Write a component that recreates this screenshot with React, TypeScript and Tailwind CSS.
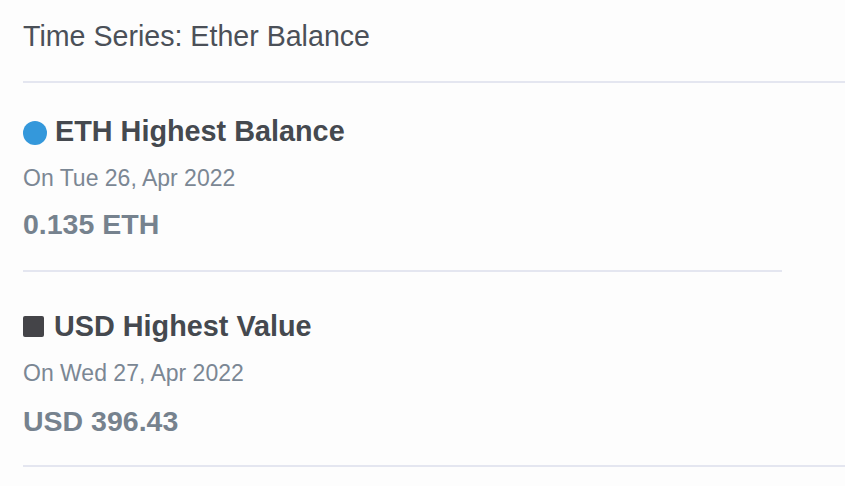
const stats = [
  {
    id: "eth",
    title: "ETH Highest Balance",
    date: "On Tue 26, Apr 2022",
    value: "0.135 ETH",
    marker: "circle",
  },
  {
    id: "usd",
    title: "USD Highest Value",
    date: "On Wed 27, Apr 2022",
    value: "USD 396.43",
    marker: "square",
  },
]

const App = () => {
  return (
    <div className="min-h-screen w-full bg-[#fdfdfd] pl-[23px] font-['Liberation_Sans',Arial,sans-serif]">
      <h2 className="pt-[22px] text-[28.6px] leading-[28px] text-[#4b5058]">
        Time Series: Ether Balance
      </h2>
      <div className="mt-[31px] h-[2px] bg-[#e4e6f0]" />

      {/* ETH */}
      <div className="mt-[34px] flex items-center gap-[8px]">
        <span className="mt-[3px] h-[24px] w-[24px] rounded-full bg-[#3498db]" />
        <h3 className="text-[28.8px] font-bold leading-[28px] text-[#45494f]">
          {stats[0].title}
        </h3>
      </div>
      <p className="mt-[22px] text-[23px] leading-[22px] text-[#7b8794]">
        {stats[0].date}
      </p>
      <p className="mt-[21px] text-[28.5px] font-bold leading-[28px] text-[#76828e]">
        {stats[0].value}
      </p>
      <div className="mt-[32px] mr-[63px] h-[2px] bg-[#e4e6f0]" />

      {/* USD */}
      <div className="mt-[40px] flex items-center gap-[10px]">
        <span className="h-[21px] w-[21px] rounded-[2px] bg-[#444448]" />
        <h3 className="text-[28.8px] font-bold leading-[28px] text-[#45494f]">
          {stats[1].title}
        </h3>
      </div>
      <p className="mt-[22px] text-[23px] leading-[22px] text-[#7b8794]">
        {stats[1].date}
      </p>
      <p className="mt-[23px] text-[28.5px] font-bold leading-[28px] text-[#76828e]">
        {stats[1].value}
      </p>
      <div className="mt-[30px] h-[2px] bg-[#e4e6f0]" />
    </div>
  )
}

export default App
